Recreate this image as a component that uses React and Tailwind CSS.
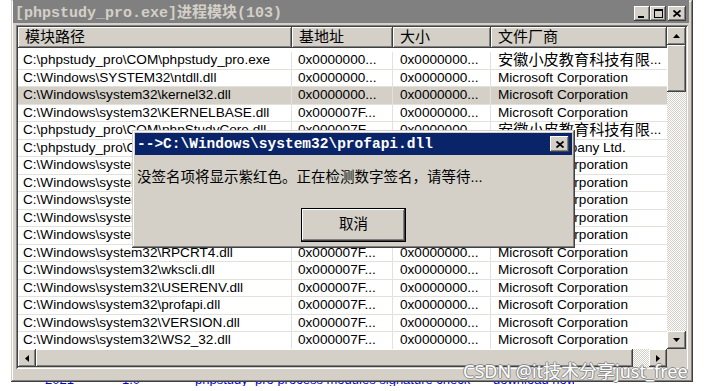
import React from "react";

const RAISED =
  "shadow-[inset_-1px_-1px_0_#404040,inset_1px_1px_0_#ffffff,inset_-2px_-2px_0_#808080,inset_2px_2px_0_#d4d0c8]";
const FRAME =
  "shadow-[inset_-1px_-1px_0_#404040,inset_1px_1px_0_#d4d0c8,inset_-2px_-2px_0_#808080,inset_2px_2px_0_#ffffff]";
const SUNKEN =
  "shadow-[inset_1px_1px_0_#808080,inset_-1px_-1px_0_#ffffff,inset_2px_2px_0_#404040,inset_-2px_-2px_0_#d4d0c8]";
const DITHER =
  "bg-[repeating-conic-gradient(#d4d0c8_0%_25%,#ffffff_0%_50%)] bg-[length:2px_2px]";

const CN = "安徽小皮教育科技有限";

const rows = [
  ["C:\\phpstudy_pro\\COM\\phpstudy_pro.exe", "0x0000000...", "0x0000000...", "cn"],
  ["C:\\Windows\\SYSTEM32\\ntdll.dll", "0x0000000...", "0x0000000...", "Microsoft Corporation"],
  ["C:\\Windows\\system32\\kernel32.dll", "0x0000000...", "0x0000000...", "Microsoft Corporation", true],
  ["C:\\Windows\\system32\\KERNELBASE.dll", "0x000007F...", "0x0000000...", "Microsoft Corporation"],
  ["C:\\phpstudy_pro\\COM\\phpStudyCore.dll", "0x000007F...", "0x0000000...", "cn"],
  ["C:\\phpstudy_pro\\COM\\libcurl.dll", "0x000007F...", "0x0000000...", "XiaoPi Company Ltd."],
  ["C:\\Windows\\system32\\ADVAPI32.dll", "0x000007F...", "0x0000000...", "Microsoft Corporation"],
  ["C:\\Windows\\system32\\msvcrt.dll", "0x000007F...", "0x0000000...", "Microsoft Corporation"],
  ["C:\\Windows\\system32\\sechost.dll", "0x000007F...", "0x0000000...", "Microsoft Corporation"],
  ["C:\\Windows\\system32\\USER32.dll", "0x000007F...", "0x0000000...", "Microsoft Corporation"],
  ["C:\\Windows\\system32\\GDI32.dll", "0x000007F...", "0x0000000...", "Microsoft Corporation"],
  ["C:\\Windows\\system32\\RPCRT4.dll", "0x000007F...", "0x0000000...", "Microsoft Corporation"],
  ["C:\\Windows\\system32\\wkscli.dll", "0x000007F...", "0x0000000...", "Microsoft Corporation"],
  ["C:\\Windows\\system32\\USERENV.dll", "0x000007F...", "0x0000000...", "Microsoft Corporation"],
  ["C:\\Windows\\system32\\profapi.dll", "0x000007F...", "0x0000000...", "Microsoft Corporation"],
  ["C:\\Windows\\system32\\VERSION.dll", "0x000007F...", "0x0000000...", "Microsoft Corporation"],
  ["C:\\Windows\\system32\\WS2_32.dll", "0x000007F...", "0x0000000...", "Microsoft Corporation"],
];

function Tri({ dir }) {
  if (dir === "up")
    return (
      <svg width="7" height="4" viewBox="0 0 7 4">
        <polygon points="3.5,0 7,4 0,4" fill="#000" />
      </svg>
    );
  if (dir === "down")
    return (
      <svg width="7" height="4" viewBox="0 0 7 4">
        <polygon points="0,0 7,0 3.5,4" fill="#000" />
      </svg>
    );
  if (dir === "left")
    return (
      <svg width="4" height="7" viewBox="0 0 4 7">
        <polygon points="4,0 4,7 0,3.5" fill="#000" />
      </svg>
    );
  return (
    <svg width="4" height="7" viewBox="0 0 4 7">
      <polygon points="0,0 4,3.5 0,7" fill="#000" />
    </svg>
  );
}

function ArrowBtn({ dir, cls }) {
  return (
    <div className={`bg-[#d4d0c8] flex items-center justify-center shrink-0 ${RAISED} ${cls}`}>
      <Tri dir={dir} />
    </div>
  );
}

function CloseX() {
  return (
    <svg width="8" height="7" viewBox="0 0 8 7">
      <path d="M0.5 0.5 L7.5 6.5 M7.5 0.5 L0.5 6.5" stroke="#000" strokeWidth="1.8" fill="none" />
    </svg>
  );
}

function Row({ r }) {
  const [path, base, size, vendor, sel] = r;
  return (
    <div
      className={`flex h-[17.5px] shrink-0 border-b border-[#e3e1dc] ${sel ? "bg-[#d4d0c8]" : "bg-white"}`}
    >
      <div className="w-[274px] shrink-0 pl-[5px] flex items-center border-r border-[#e3e1dc] whitespace-nowrap overflow-hidden">
        {path}
      </div>
      <div className="w-[101px] shrink-0 pl-[6px] flex items-center border-r border-[#e3e1dc] whitespace-nowrap overflow-hidden">
        {base}
      </div>
      <div className="w-[98px] shrink-0 pl-[7px] flex items-center border-r border-[#e3e1dc] whitespace-nowrap overflow-hidden">
        {size}
      </div>
      <div className="w-[176px] shrink-0 pl-[7px] flex items-center whitespace-nowrap overflow-hidden">
        {vendor === "cn" ? (
          <>
            <span className="text-[15.2px]">{CN}</span>
            <span>...</span>
          </>
        ) : (
          vendor
        )}
      </div>
    </div>
  );
}

function HeaderCell({ w, children }) {
  return (
    <div
      className={`${w} h-full shrink-0 bg-[#d4d0c8] pl-[7px] flex items-center text-[15px] ${RAISED}`}
    >
      {children}
    </div>
  );
}

export default function App() {
  return (
    <div className="relative w-[716px] h-[391px] bg-white overflow-hidden font-['Liberation_Sans','Noto_Sans_CJK_SC',sans-serif] text-[13.6px] text-black">
      {/* main window */}
      <div className={`ml-[11px] w-[682px] h-[382px] bg-[#d4d0c8] pl-[2px] pr-[4px] flex flex-col ${FRAME}`}>
        {/* title bar */}
        <div className="h-[23px] shrink-0 bg-[#808080] flex items-center justify-between pl-[2px] pr-[3px] pt-[3px]">
          <span className="font-['Liberation_Mono','Noto_Sans_CJK_SC',monospace] font-bold text-[15px] text-[#d4d0c8] whitespace-nowrap leading-none">
            [phpstudy_pro.exe]进程模块(103)
          </span>
          <div className="flex items-center">
            <div className={`w-[16px] h-[15px] bg-[#d4d0c8] flex items-end justify-start pl-[4px] pb-[3px] ${RAISED}`}>
              <div className="w-[6px] h-[2px] bg-black" />
            </div>
            <div className={`w-[16px] h-[15px] bg-[#d4d0c8] flex items-center justify-center ${RAISED}`}>
              <div className="w-[9px] h-[9px] border border-black border-t-2" />
            </div>
            <div className={`ml-[2px] w-[18px] h-[15px] bg-[#d4d0c8] flex items-center justify-center ${RAISED}`}>
              <CloseX />
            </div>
          </div>
        </div>

        {/* list view */}
        <div className={`mt-[2px] ml-[3px] mr-[1px] h-[344px] shrink-0 bg-white p-[2px] flex flex-col ${SUNKEN}`}>
          <div className="flex h-[322px] shrink-0">
            <div className="w-[649px] shrink-0 flex flex-col overflow-hidden">
              <div className="flex h-[21px] shrink-0">
                <HeaderCell w="w-[274px]">模块路径</HeaderCell>
                <HeaderCell w="w-[101px]">基地址</HeaderCell>
                <HeaderCell w="w-[98px]">大小</HeaderCell>
                <HeaderCell w="w-[176px]">文件厂商</HeaderCell>
              </div>
              <div className="pt-[4px] flex flex-col">
                {rows.map((r, i) => (
                  <Row key={i} r={r} />
                ))}
              </div>
            </div>
            {/* vertical scrollbar */}
            <div className="w-[19px] shrink-0 flex flex-col">
              <ArrowBtn dir="up" cls="h-[18px]" />
              <div className={`h-[47px] shrink-0 bg-[#d4d0c8] ${RAISED}`} />
              <div className={`flex-1 ${DITHER}`} />
              <ArrowBtn dir="down" cls="h-[18px]" />
            </div>
          </div>
          {/* horizontal scrollbar */}
          <div className="flex h-[18px] shrink-0">
            <ArrowBtn dir="left" cls="w-[18px]" />
            <div className={`flex-1 bg-[#d4d0c8] ${RAISED}`} />
            <div className={`w-[16px] shrink-0 ${DITHER}`} />
            <ArrowBtn dir="right" cls="w-[18px]" />
            <div className="w-[19px] shrink-0 bg-[#d4d0c8]" />
          </div>
        </div>
      </div>

      {/* page behind: only the bottoms of blue text show under the window */}
      <div className="h-[9px] flex flex-col overflow-hidden text-[#0000ee] text-[13px] leading-[13px] font-['Liberation_Sans',sans-serif]">
        <div className="mt-[-9px] h-[13px] shrink-0 flex whitespace-nowrap">
          <span className="ml-[45px] w-[30px] shrink-0 overflow-hidden">2021</span>
          <span className="ml-[47px] w-[18px] shrink-0 overflow-hidden">1.0</span>
          <span className="ml-[55px] w-[279px] shrink-0 overflow-hidden">phpstudy_pro process modules signature check list</span>
          <span className="ml-[19px] w-[81px] shrink-0 overflow-hidden">download now</span>
        </div>
      </div>

      {/* modal dialog */}
      <div className={`absolute left-[132px] top-[130px] w-[443px] h-[118px] bg-[#d4d0c8] p-[3px] flex flex-col ${FRAME}`}>
        <div className="h-[22px] shrink-0 bg-[#0a246a] flex items-center justify-between pl-[2px] pr-[3px]">
          <span className="font-['Liberation_Mono','Noto_Sans_CJK_SC',monospace] font-bold text-[14.5px] text-white whitespace-nowrap leading-none">
            {"-->C:\\Windows\\system32\\profapi.dll"}
          </span>
          <div className={`w-[19px] h-[16px] bg-[#d4d0c8] flex items-center justify-center ${RAISED}`}>
            <CloseX />
          </div>
        </div>
        <div className="mt-[12px] pl-[2px] text-[14.5px] leading-[20px] whitespace-nowrap">
          没签名项将显示紫红色。正在检测数字签名，请等待...
        </div>
        <div className="mt-[21px] flex justify-center">
          <div className="w-[105px] h-[34px] border border-black bg-[#d4d0c8]">
            <div className={`w-full h-full flex items-center justify-center text-[14.5px] ${RAISED}`}>
              取消
            </div>
          </div>
        </div>
      </div>

      {/* watermark */}
      <div className="absolute left-[463px] top-[360px] text-[18px] leading-[22px] text-white font-['Noto_Sans','Noto_Sans_CJK_SC',sans-serif] whitespace-nowrap [text-shadow:1px_0_0_#8c8c8c,-1px_0_0_#8c8c8c,0_1px_0_#8c8c8c,0_-1px_0_#8c8c8c]">
        CSDN @it技术分享just_free
      </div>
    </div>
  );
}
